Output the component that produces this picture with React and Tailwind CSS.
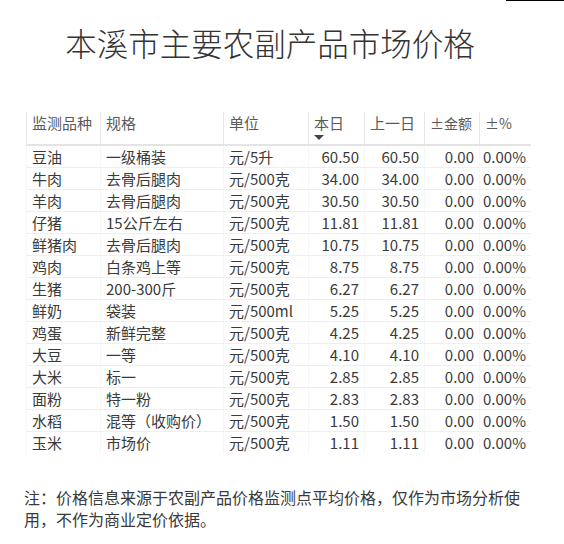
const rows = [
  ["豆油", "一级桶装", "元/5升", "60.50", "60.50", "0.00", "0.00%"],
  ["牛肉", "去骨后腿肉", "元/500克", "34.00", "34.00", "0.00", "0.00%"],
  ["羊肉", "去骨后腿肉", "元/500克", "30.50", "30.50", "0.00", "0.00%"],
  ["仔猪", "15公斤左右", "元/500克", "11.81", "11.81", "0.00", "0.00%"],
  ["鲜猪肉", "去骨后腿肉", "元/500克", "10.75", "10.75", "0.00", "0.00%"],
  ["鸡肉", "白条鸡上等", "元/500克", "8.75", "8.75", "0.00", "0.00%"],
  ["生猪", "200-300斤", "元/500克", "6.27", "6.27", "0.00", "0.00%"],
  ["鲜奶", "袋装", "元/500ml", "5.25", "5.25", "0.00", "0.00%"],
  ["鸡蛋", "新鲜完整", "元/500克", "4.25", "4.25", "0.00", "0.00%"],
  ["大豆", "一等", "元/500克", "4.10", "4.10", "0.00", "0.00%"],
  ["大米", "标一", "元/500克", "2.85", "2.85", "0.00", "0.00%"],
  ["面粉", "特一粉", "元/500克", "2.83", "2.83", "0.00", "0.00%"],
  ["水稻", "混等（收购价）", "元/500克", "1.50", "1.50", "0.00", "0.00%"],
  ["玉米", "市场价", "元/500克", "1.11", "1.11", "0.00", "0.00%"],
];

const cols = [
  { label: "监测品种", w: "w-[74px]" },
  { label: "规格", w: "w-[123px]" },
  { label: "单位", w: "w-[85px]" },
  { label: "本日", w: "w-[56px]", num: true, sort: true },
  { label: "上一日", w: "w-[60px]", num: true },
  { label: "±金额", w: "w-[55px]", num: true },
  { label: "±%", w: "w-[52px]", num: true },
];

const App = () => {
  return (
    <div
      className="relative w-[564px] h-[544px] bg-white text-[#3a3a3a]"
      style={{ fontFamily: '"Noto Sans CJK SC", "Noto Sans", sans-serif' }}
    >
      <div className="absolute top-0 right-0 w-[58px] h-px bg-black" />

      <h1 className="w-[540px] pt-[21px] text-center text-[31.5px] leading-[42px] font-light text-[#333]">
        本溪市主要农副产品市场价格
      </h1>

      <div className="ml-[26px] mt-[49px] w-[505px]">
        <div className="flex h-[34px] border-b-2 border-[#e4e4e4]">
          {cols.map((c) => (
            <div
              key={c.label}
              className={`${c.w} border-l border-[#e8e8e8] pl-[5px] text-[15px] leading-[22px] text-[#5a5a5a] flex flex-col`}
            >
              <span className={c.label.startsWith("±") ? "text-[14px]" : ""}>{c.label}</span>
              {c.sort && (
                <svg width="10" height="6" viewBox="0 0 10 6" className="mt-[1px]">
                  <path d="M0 0 L10 0 L5 5 Z" fill="#444" />
                </svg>
              )}
            </div>
          ))}
        </div>

        {rows.map((r, i) => (
          <div
            key={r[0]}
            className={`flex h-[22px] ${i < rows.length - 1 ? "border-b border-[#efefef]" : ""}`}
          >
            {r.map((v, j) => (
              <div
                key={j}
                className={`${cols[j].w} border-l border-[#f6f6f6] text-[15px] leading-[21px] whitespace-nowrap ${
                  cols[j].num ? "text-right pr-[5px]" : "pl-[5px]"
                }`}
              >
                {v}
              </div>
            ))}
          </div>
        ))}
      </div>

      <p className="ml-[24px] mt-[32px] w-[504px] text-[16px] leading-[22px] text-[#3a3a3a]">
        注：价格信息来源于农副产品价格监测点平均价格，仅作为市场分析使用，不作为商业定价依据。
      </p>
    </div>
  );
};

export default App;
